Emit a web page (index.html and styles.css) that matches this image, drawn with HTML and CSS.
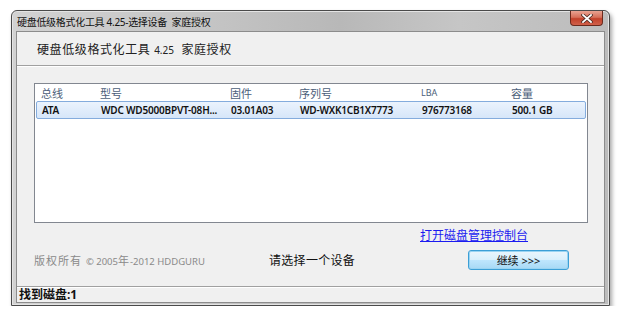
FILE: index.html
```html
<!DOCTYPE html>
<html lang="zh-CN">
  <head>
    <meta charset="UTF-8" />
    <meta name="viewport" content="width=device-width, initial-scale=1.0" />
    <title>硬盘低级格式化工具 4.25-选择设备</title>
    <link rel="stylesheet" href="styles.css">
  </head>
  <body>
    <div class="window">
      <div class="titlebar">
        <span class="title">硬盘低级格式化工具 4.25-选择设备&nbsp;&nbsp;家庭授权</span>
        <button class="close" type="button">
          <svg width="12" height="9" viewBox="0 0 12 9">
            <path d="M2 1 L10 8 M10 1 L2 8" stroke="#4a2a22" stroke-width="3.4" stroke-linecap="square" />
            <path d="M2 1 L10 8 M10 1 L2 8" stroke="#ffffff" stroke-width="1.8" stroke-linecap="square" />
          </svg>
        </button>
      </div>

      <div class="client">
        <div class="header">
          <span class="brand">硬盘低级格式化工具 <span class="ver">4.25</span>&nbsp; 家庭授权</span>
        </div>

        <div class="main">
          <div class="listbox">
            <div class="row head">
              <span>总线</span>
              <span>型号</span>
              <span>固件</span>
              <span>序列号</span>
              <span class="latin">LBA</span>
              <span>容量</span>
            </div>
            <div class="row selected">
              <span>ATA</span>
              <span>WDC WD5000BPVT-08H...</span>
              <span>03.01A03</span>
              <span>WD-WXK1CB1X7773</span>
              <span>976773168</span>
              <span>500.1 GB</span>
            </div>
          </div>

          <div class="links">
            <a class="console" href="#">打开磁盘管理控制台</a>
          </div>

          <div class="footer">
            <span class="copyright">版权所有 <span class="latin">© 2005</span>年<span class="latin">-2012 HDDGURU</span></span>
            <span class="hint">请选择一个设备</span>
            <button class="next" type="button">继续 &gt;&gt;&gt;</button>
          </div>
        </div>

        <div class="statusbar">找到磁盘:1</div>
      </div>
    </div>
  </body>
</html>
```

FILE: styles.css
```css
body {
  margin: 0;
  padding: 10px 0 0 11px;
  background-color: #ffffff;
  font-family: "Noto Sans", "Noto Sans CJK SC", sans-serif;
  color: #1a1a1a;
}
.window {
  width: 599px;
  height: 296px;
  border: 1px solid #4a4a4a;
  border-radius: 6px 6px 0 0;
  background: linear-gradient(90deg, #d2d2d2 0%, #c6c6c6 30%, #b8b8b8 55%, #c6c6c6 75%, #bcbcbc 100%);
  box-shadow: 2px 3px 4px rgba(0, 0, 0, 0.35), inset 0 0 0 1px #e4e4e4;
  display: flex;
  flex-direction: column;
  padding: 0 4px 2px 4px;
  box-sizing: border-box;
}
.titlebar {
  height: 20px;
  display: flex;
  align-items: center;
  justify-content: space-between;
}
.title {
  font-size: 10px;
  color: #111;
  letter-spacing: -0.3px;
  padding-left: 1px;
}
.close {
  align-self: flex-start;
  width: 33px;
  height: 15px;
  margin-right: 2px;
  padding: 0;
  border: 1px solid #6b2a1d;
  border-top: none;
  border-radius: 0 0 4px 4px;
  background: linear-gradient(180deg, #e9a392 0%, #d6705a 45%, #c2412a 55%, #d0604a 100%);
  display: flex;
  align-items: center;
  justify-content: center;
}
.client {
  flex: 1;
  border: 1px solid #8c8c8c;
  background-color: #f0f0f0;
  display: flex;
  flex-direction: column;
}
.header {
  height: 33px;
  display: flex;
  align-items: center;
  padding-left: 20px;
  border-bottom: 1px solid #a0a0a0;
  box-shadow: 0 1px 0 #ffffff;
  background-color: #f0f0f0;
}
.brand {
  font-size: 12px;
  letter-spacing: 0.6px;
  color: #222;
}
.ver {
  font-size: 10px;
  letter-spacing: 0;
}
.main {
  flex: 1;
  padding: 16px 16px 0 17px;
  margin-top: 1px;
}
.listbox {
  height: 138px;
  border: 1px solid #828790;
  background-color: #ffffff;
}
.row {
  display: grid;
  grid-template-columns: 59px 130px 69px 122px 90px 1fr;
  padding-left: 6px;
  align-items: center;
  font-size: 10px;
}
.head {
  height: 17px;
  font-size: 11px;
  color: #4c607a;
}
.head .latin {
  font-size: 9px;
}
.selected {
  height: 16px;
  margin: 0 1px 0 1px;
  padding-left: 5px;
  border: 1px solid #84acdd;
  border-radius: 2px;
  background: linear-gradient(180deg, #ebf3fd 0%, #d6e6f9 100%);
  color: #111;
  font-weight: 600;
  letter-spacing: -0.2px;
}
.links {
  height: 24px;
  display: flex;
  align-items: center;
  padding-left: 386px;
}
.console {
  font-size: 12px;
  color: #1b1bf0;
  text-decoration: underline;
}
.footer {
  display: grid;
  grid-template-columns: 235px 199px 101px;
  align-items: center;
  height: 20px;
  margin-top: 3px;
}
.copyright {
  font-size: 11px;
  color: #8a8a8a;
  letter-spacing: 1px;
}
.copyright .latin {
  font-size: 9.5px;
  letter-spacing: 0;
}
.hint {
  font-size: 12px;
  letter-spacing: 0.3px;
  color: #111;
}
.next {
  height: 20px;
  padding: 0;
  border: 1px solid #3c9fd6;
  border-radius: 3px;
  background: linear-gradient(180deg, #eaf6fd 0%, #d9f0fc 48%, #bee6fd 52%, #a7d9f5 100%);
  box-shadow: inset 0 0 0 1px #9ad4f2;
  font-family: "Noto Sans", "Noto Sans CJK SC", sans-serif;
  font-size: 11px;
  color: #111;
}
.statusbar {
  height: 15px;
  border-top: 1px solid #a0a0a0;
  box-shadow: inset 0 1px 0 #ffffff;
  padding-left: 2px;
  font-size: 12px;
  line-height: 15px;
  font-weight: 700;
  color: #111;
}
```
